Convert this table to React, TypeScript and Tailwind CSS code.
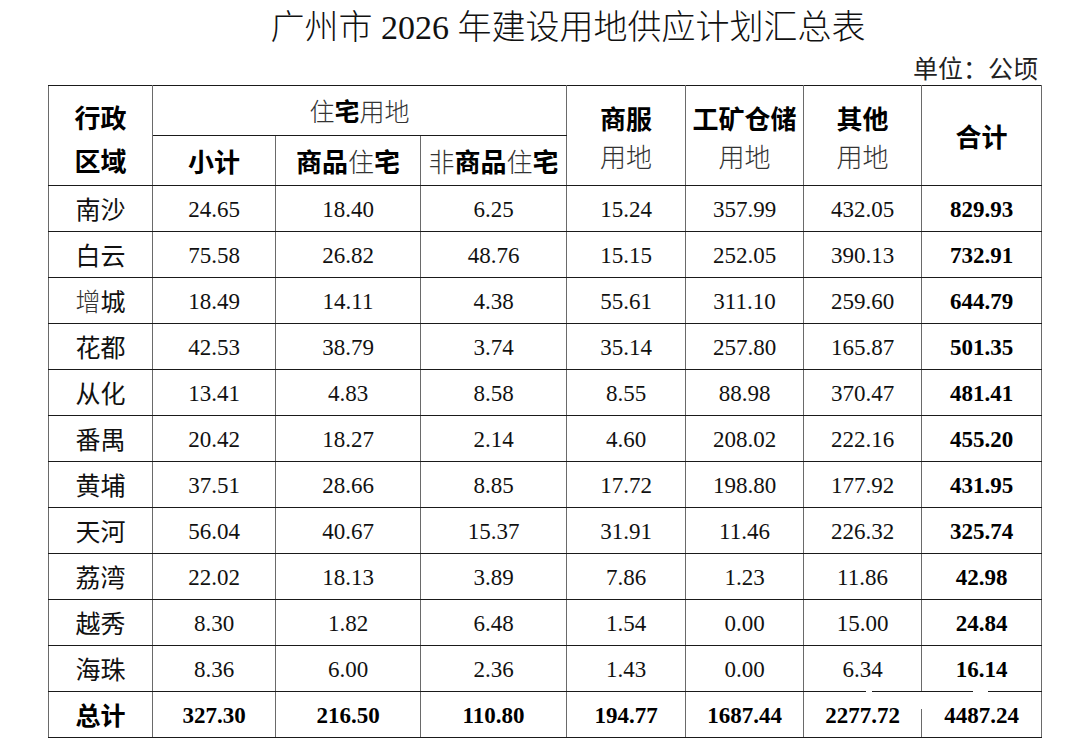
import React from "react";

const rows: [string, string[]][] = [
  ["南沙", ["24.65", "18.40", "6.25", "15.24", "357.99", "432.05", "829.93"]],
  ["白云", ["75.58", "26.82", "48.76", "15.15", "252.05", "390.13", "732.91"]],
  ["增城", ["18.49", "14.11", "4.38", "55.61", "311.10", "259.60", "644.79"]],
  ["花都", ["42.53", "38.79", "3.74", "35.14", "257.80", "165.87", "501.35"]],
  ["从化", ["13.41", "4.83", "8.58", "8.55", "88.98", "370.47", "481.41"]],
  ["番禺", ["20.42", "18.27", "2.14", "4.60", "208.02", "222.16", "455.20"]],
  ["黄埔", ["37.51", "28.66", "8.85", "17.72", "198.80", "177.92", "431.95"]],
  ["天河", ["56.04", "40.67", "15.37", "31.91", "11.46", "226.32", "325.74"]],
  ["荔湾", ["22.02", "18.13", "3.89", "7.86", "1.23", "11.86", "42.98"]],
  ["越秀", ["8.30", "1.82", "6.48", "1.54", "0.00", "15.00", "24.84"]],
  ["海珠", ["8.36", "6.00", "2.36", "1.43", "0.00", "6.34", "16.14"]],
];

const totals = ["327.30", "216.50", "110.80", "194.77", "1687.44", "2277.72", "4487.24"];

const cjk = "font-['Noto_Sans_CJK_SC',sans-serif]";
const num = "font-['Liberation_Serif','Noto_Sans_CJK_SC',serif]";
const cell = "border-x border-x-[#6a6a6a] border-y border-y-[#1a1a1a] p-0 text-center align-middle";

function Light({ children }: { children: React.ReactNode }) {
  return <span className="font-light text-[#333]">{children}</span>;
}

export default function App() {
  return (
    <div className="w-[1080px] h-[755px] bg-white text-black overflow-hidden">
      <div className="pt-[6px]">
        <div
          className={`h-[44px] leading-[44px] text-[34px] pl-[56px] text-center ${num} font-light text-[#111]`}
        >
          广州市 2026 年建设用地供应计划汇总表
        </div>
        <div className={`h-[35px] flex items-center justify-end pr-[42px] text-[25px] ${cjk} text-[#222]`}>
          单位：公顷
        </div>
        <div className="relative ml-[48px] w-[993px]">
          <table className="w-[993px] table-fixed border-collapse border border-[#555]">
            <colgroup>
              <col className="w-[104px]" />
              <col className="w-[123px]" />
              <col className="w-[145px]" />
              <col className="w-[146px]" />
              <col className="w-[119px]" />
              <col className="w-[118px]" />
              <col className="w-[118px]" />
              <col className="w-[120px]" />
            </colgroup>
            <thead>
              <tr className="h-[50px]">
                <td rowSpan={2} className={`${cell} ${cjk} text-[26px] font-bold leading-[43px] pt-[4px]`}>
                  行政
                  <br />
                  区域
                </td>
                <td colSpan={3} className={`${cell} ${cjk} text-[25px]`}>
                  <Light>住</Light>
                  <span className="font-bold">宅</span>
                  <Light>用地</Light>
                </td>
                <td rowSpan={2} className={`${cell} ${cjk} text-[26px] leading-[38px] pt-[2px]`}>
                  <span className="font-bold">商服</span>
                  <br />
                  <Light>用地</Light>
                </td>
                <td rowSpan={2} className={`${cell} ${cjk} text-[26px] leading-[38px] pt-[2px]`}>
                  <span className="font-bold">工矿仓储</span>
                  <br />
                  <Light>用地</Light>
                </td>
                <td rowSpan={2} className={`${cell} ${cjk} text-[26px] leading-[38px] pt-[2px]`}>
                  <span className="font-bold">其他</span>
                  <br />
                  <Light>用地</Light>
                </td>
                <td rowSpan={2} className={`${cell} ${cjk} text-[26px] font-bold`}>
                  合计
                </td>
              </tr>
              <tr className="h-[50px]">
                <td className={`${cell} ${cjk} text-[26px] font-bold`}>小计</td>
                <td className={`${cell} ${cjk} text-[26px]`}>
                  <span className="font-bold">商品</span>
                  <Light>住</Light>
                  <span className="font-bold">宅</span>
                </td>
                <td className={`${cell} ${cjk} text-[26px]`}>
                  <Light>非</Light>
                  <span className="font-bold">商品</span>
                  <Light>住</Light>
                  <span className="font-bold">宅</span>
                </td>
              </tr>
            </thead>
            <tbody>
              {rows.map(([name, vals]) => (
                <tr key={name} className="h-[46px]">
                  <td className={`${cell} ${cjk} text-[25px] text-[#111]`}>
                    {name === "增城" ? (
                      <>
                        <Light>增</Light>城
                      </>
                    ) : (
                      name
                    )}
                  </td>
                  {vals.map((v, i) => (
                    <td
                      key={i}
                      className={`${cell} ${num} text-[23px] pt-[3px] ${i === 6 ? "font-bold text-black" : "text-[#111]"}`}
                    >
                      {v}
                    </td>
                  ))}
                </tr>
              ))}
              <tr className="h-[46px]">
                <td className={`${cell} ${cjk} text-[25px] font-bold`}>总计</td>
                {totals.map((v, i) => (
                  <td key={i} className={`${cell} ${num} text-[23px] pt-[3px] font-bold`}>
                    {v}
                  </td>
                ))}
              </tr>
            </tbody>
          </table>
          <div className="absolute left-[818px] top-[606px] w-[6px] h-[3px] bg-white" />
          <div className="absolute left-[925px] top-[606px] w-[15px] h-[3px] bg-white" />
          <div className="absolute left-[872px] top-[607px] w-[3px] h-[17px] bg-white" />
        </div>
      </div>
    </div>
  );
}
